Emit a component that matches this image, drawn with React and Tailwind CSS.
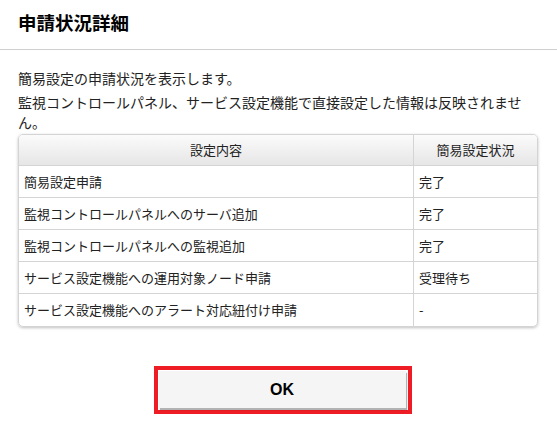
const rows = [
  ['簡易設定申請', '完了'],
  ['監視コントロールパネルへのサーバ追加', '完了'],
  ['監視コントロールパネルへの監視追加', '完了'],
  ['サービス設定機能への運用対象ノード申請', '受理待ち'],
  ['サービス設定機能へのアラート対応紐付け申請', '-'],
];

const font = { fontFamily: '"Noto Sans CJK JP", "Liberation Sans", sans-serif' };

export default function App() {
  return (
    <div className="w-[557px] h-[429px] bg-white text-[#222]" style={font}>
      {/* Header */}
      <div className="h-[50px] border-b border-[#cfcfcf] px-[18px] pt-[10px]">
        <h1 className="text-[18.5px] leading-[24px] font-bold text-black">申請状況詳細</h1>
      </div>

      {/* Body */}
      <div className="px-[18px] pt-[18px]">
        <p className="text-[14px] leading-[20px] mb-[4px]">簡易設定の申請状況を表示します。</p>
        <p className="text-[14px] leading-[20px] w-[521px]">
          監視コントロールパネル、サービス設定機能で直接設定した情報は反映されません。
        </p>

        <div className="mt-[2px] w-[520px] rounded-[5px] border border-[#d4d4d4] shadow-[0_1px_3px_rgba(0,0,0,0.25)] overflow-hidden">
          <div className="flex h-[31px] border-b border-[#d4d4d4] bg-gradient-to-b from-[#fbfbfb] to-[#e6e6e6] text-[13px]">
            <div className="w-[395px] border-r border-[#d4d4d4] flex items-center justify-center">設定内容</div>
            <div className="flex-1 flex items-center justify-center">簡易設定状況</div>
          </div>
          {rows.map(([name, status], i) => (
            <div
              key={name}
              className={`flex h-[32px] text-[13px] ${i < rows.length - 1 ? 'border-b border-[#d4d4d4]' : ''}`}
            >
              <div className="w-[395px] border-r border-[#d4d4d4] flex items-center pl-[5px]">{name}</div>
              <div className="flex-1 flex items-center pl-[5px]">{status}</div>
            </div>
          ))}
        </div>
      </div>

      {/* Footer */}
      <div className="flex justify-center pt-[39px] pl-[8px]">
        <div className="w-[258px] h-[48px] border-[4px] border-[#ee1c25] p-[1px]">
          <button className="w-[247px] h-[37px] bg-[#f5f5f5] shadow-[1px_2px_1px_rgba(0,0,0,0.3)] text-[16px] font-bold text-black flex items-center justify-center" style={{ fontFamily: '"Liberation Sans", sans-serif' }}>
            OK
          </button>
        </div>
      </div>
    </div>
  );
}
